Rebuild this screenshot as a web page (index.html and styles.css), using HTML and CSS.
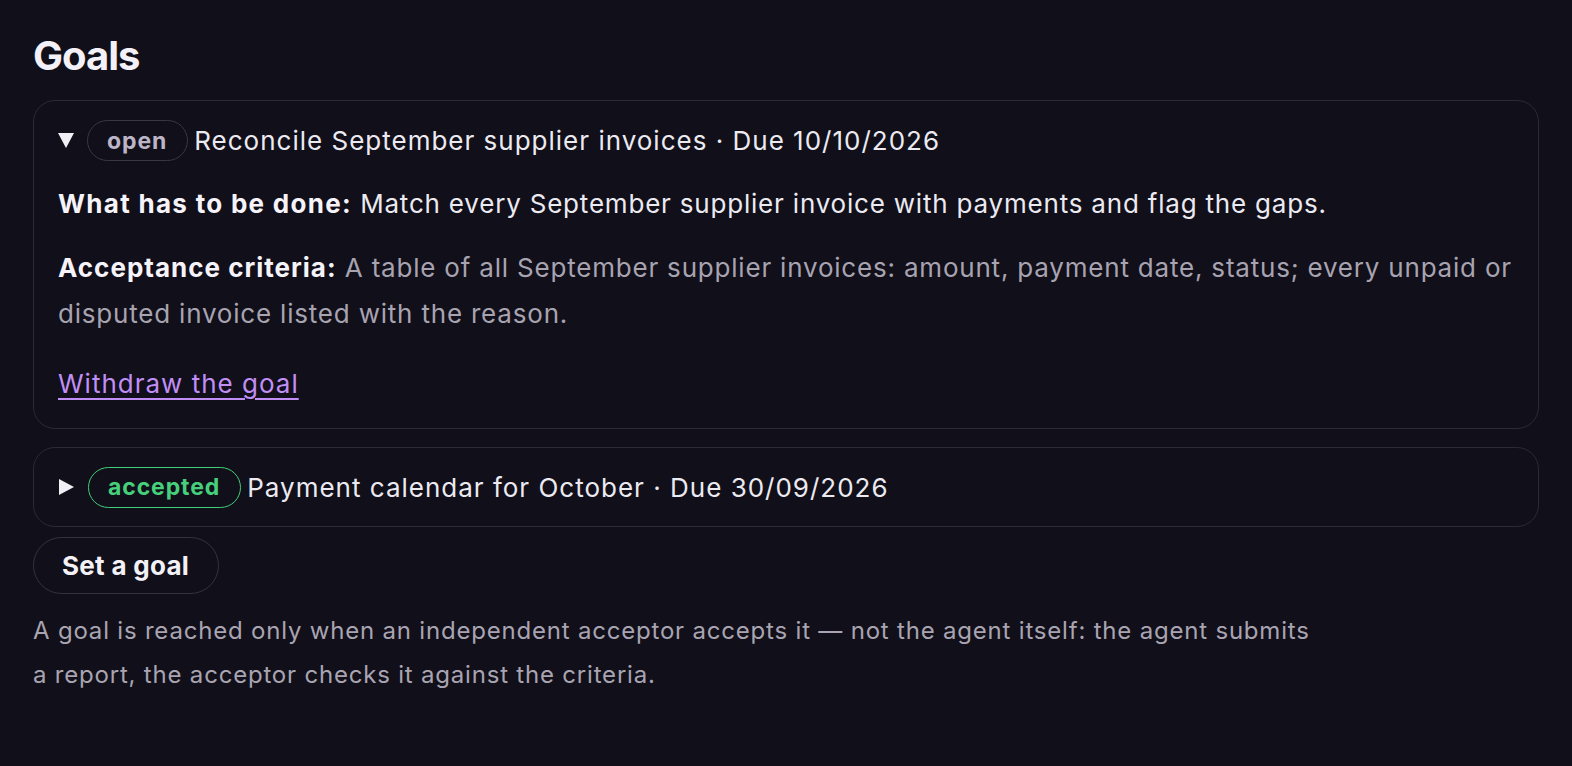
FILE: index.html
```html
<!DOCTYPE html>
<html lang="en">
<head>
<meta charset="utf-8">
<title>Goals</title>
<link rel="stylesheet" href="styles.css">
</head>
<body>
<main class="page">
  <h1 class="title">Goals</h1>
  <details class="goal goal-first" open>
    <summary class="goal-head">
      <span class="caret caret-open"></span>
      <span class="badge badge-open">open</span>
      <span class="goal-title">Reconcile September supplier invoices · Due 10/10/2026</span>
    </summary>
    <div class="goal-body">
      <p class="field"><strong>What has to be done:</strong> Match every September supplier invoice with payments and flag the gaps.</p>
      <p class="field"><strong class="tight">Acceptance criteria:</strong> <span class="muted">A table of all September supplier invoices: amount, payment date, status; every unpaid or disputed invoice listed with the reason.</span></p>
      <a class="link" href="#">Withdraw the goal</a>
    </div>
  </details>
  <details class="goal goal-second">
    <summary class="goal-head">
      <span class="caret caret-closed"></span>
      <span class="badge badge-accepted">accepted</span>
      <span class="goal-title">Payment calendar for October · Due 30/09/2026</span>
    </summary>
  </details>
  <button class="btn" type="button">Set a goal</button>
  <p class="note">A goal is reached only when an independent acceptor accepts it — not the agent itself: the agent submits a report, the acceptor checks it against the criteria.</p>
</main>
</body>
</html>
```

FILE: styles.css
```css
html, body {
  margin: 0;
  padding: 0;
  background: #110f19;
}
body {
  font-family: Inter, "Noto Sans", sans-serif;
  color: #ebe9f0;
}
.page {
  padding: 26px 33px 40px;
  display: flex;
  flex-direction: column;
  align-items: flex-start;
}
.title {
  margin: 0 0 14px;
  font-size: 40px;
  font-weight: 700;
  letter-spacing: -1px;
  line-height: 60px;
  color: #f3f1f7;
}
.goal {
  box-sizing: border-box;
  align-self: stretch;
  border: 1.5px solid #2d2a36;
  border-radius: 22px;
  padding: 18.5px 20px 18.5px 24px;
}
.goal-first {
  padding-top: 19px;
  padding-bottom: 21px;
  margin-bottom: 18px;
}
.goal-second {
  margin-bottom: 10px;
}
.goal-head {
  list-style: none;
  display: flex;
  align-items: center;
  gap: 6px;
  cursor: pointer;
  height: 41px;
}
.goal-head::-webkit-details-marker { display: none; }
.caret {
  width: 0;
  height: 0;
  margin-right: 7px;
}
.caret-open {
  border-left: 8.5px solid transparent;
  border-right: 8.5px solid transparent;
  border-top: 15px solid #f1eff6;
}
.caret-closed {
  margin-left: 1px;
  border-top: 8.5px solid transparent;
  border-bottom: 8.5px solid transparent;
  border-left: 15px solid #f1eff6;
  margin-right: 8px;
}
.badge {
  box-sizing: border-box;
  height: 41px;
  display: inline-flex;
  align-items: center;
  padding: 0 20px 0 19px;
  border-radius: 21px;
  font-size: 23px;
  font-weight: 700;
  letter-spacing: 0.9px;
}
.badge-open {
  border: 1.5px solid #3a3745;
  color: #bcb5c8;
}
.badge-accepted {
  border: 1.5px solid #3fcf78;
  color: #46d07c;
}
.goal-title {
  font-size: 26px;
  font-weight: 400;
  letter-spacing: 1px;
  color: #eceaf1;
}
.goal-body {
  padding-top: 20px;
}
.field {
  margin: 0 0 18px;
  font-size: 26px;
  line-height: 46px;
  letter-spacing: 0.8px;
  color: #eceaf1;
}
.field strong {
  font-weight: 700;
  letter-spacing: 1.3px;
  color: #f6f4fa;
}
.field .tight {
  letter-spacing: 1px;
}
.muted { color: #a8a3b1; }
.link {
  display: inline-block;
  margin-top: 6px;
  font-size: 26px;
  line-height: 46px;
  letter-spacing: 1px;
  color: #c18ef6;
  text-decoration: underline;
  text-decoration-thickness: 2px;
  text-underline-offset: 5px;
}
.btn {
  box-sizing: border-box;
  height: 57px;
  padding: 0 29px 0 28px;
  border: 1.5px solid #35323f;
  border-radius: 29px;
  background: transparent;
  font-family: inherit;
  font-size: 26px;
  font-weight: 700;
  letter-spacing: 0.3px;
  color: #f3f1f7;
}
.note {
  margin: 15px 0 0;
  max-width: 1280px;
  font-size: 24px;
  line-height: 44px;
  letter-spacing: 0.8px;
  color: #a9a4b2;
}
```
